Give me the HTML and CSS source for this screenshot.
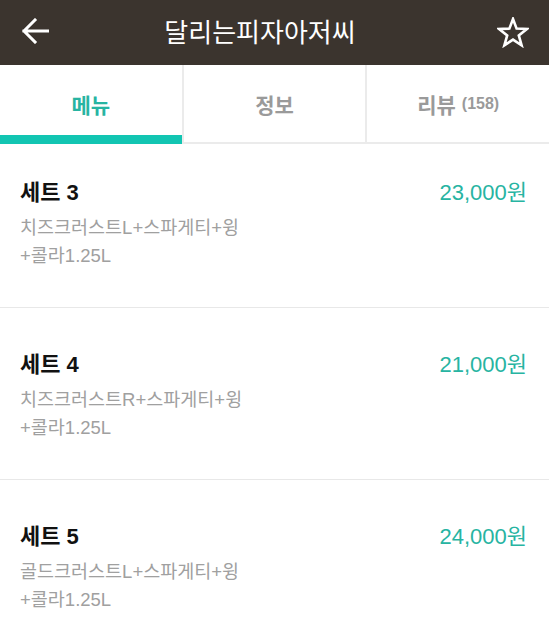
FILE: index.html
```html
<!DOCTYPE html>
<html lang="ko">

<head>
  <meta charset="UTF-8" />
  <meta name="viewport" content="width=device-width, initial-scale=1.0" />
  <title>달리는피자아저씨</title>
  <link rel="stylesheet" href="styles.css">
</head>

<body>
  <div class="header">
    <div class="header-btn back">
      <svg width="28" height="26" viewBox="0 0 28 26">
        <path d="M27 13 H3 M14 2 L3 13 L14 24" fill="none" stroke="#fff" stroke-width="3" stroke-linecap="square" />
      </svg>
    </div>
    <h1 class="title">달리는피자아저씨</h1>
    <div class="header-btn fav">
      <svg width="32" height="31" viewBox="0 0 32 31">
        <polygon points="16,2 19.6,11.6 29.8,12 21.8,18.4 24.6,28.3 16,22.6 7.4,28.3 10.2,18.4 2.2,12 12.4,11.6"
          fill="none" stroke="#fff" stroke-width="2.6" stroke-linejoin="miter" />
      </svg>
    </div>
  </div>

  <div class="tabs">
    <div class="tab active">메뉴</div>
    <div class="tab">정보</div>
    <div class="tab">리뷰 <span class="count">(158)</span></div>
  </div>

  <div class="menu-list">
    <div class="menu-item">
      <div class="row">
        <h3 class="name">세트 3</h3>
        <span class="price">23,000원</span>
      </div>
      <p class="desc">치즈크러스트L+스파게티+윙<br>+콜라1.25L</p>
    </div>
    <div class="menu-item">
      <div class="row">
        <h3 class="name">세트 4</h3>
        <span class="price">21,000원</span>
      </div>
      <p class="desc">치즈크러스트R+스파게티+윙<br>+콜라1.25L</p>
    </div>
    <div class="menu-item">
      <div class="row">
        <h3 class="name">세트 5</h3>
        <span class="price">24,000원</span>
      </div>
      <p class="desc">골드크러스트L+스파게티+윙<br>+콜라1.25L</p>
    </div>
  </div>
</body>

</html>
```

FILE: styles.css
```css
html,
body,
h1,
h3,
p {
  margin: 0;
  padding: 0;
}

body {
  font-family: "Liberation Sans", "Noto Sans CJK KR", sans-serif;
  background: #fff;
  overflow: hidden;
}

.header {
  height: 65px;
  background: #3b342e;
  display: flex;
  align-items: center;
  color: #fff;
}

.header-btn {
  width: 70px;
  height: 65px;
  display: flex;
  align-items: center;
  justify-content: center;
}

.back {
  justify-content: flex-start;
  padding-left: 21px;
  box-sizing: border-box;
  padding-bottom: 4px;
}

.fav {
  justify-content: flex-end;
  padding-right: 20px;
  box-sizing: border-box;
}

.title {
  flex: 1;
  text-align: center;
  font-size: 26px;
  font-weight: normal;
  padding-right: 29px;
  line-height: 1;
}

.tabs {
  display: flex;
  height: 79px;
  border-bottom: 2px solid #ebebeb;
  box-sizing: border-box;
}

.tab {
  flex: 1;
  display: flex;
  align-items: center;
  justify-content: center;
  font-size: 21px;
  font-weight: bold;
  color: #9a9a9a;
  border-left: 2px solid #ebebeb;
  position: relative;
}

.tab:first-child {
  border-left: none;
}

.tab.active {
  color: #27b4a2;
}

.tab.active::after {
  content: "";
  position: absolute;
  left: 0;
  right: 0;
  bottom: -2px;
  height: 9px;
  background: #12c5b2;
}

.count {
  font-size: 16px;
  margin-left: 6px;
}

.menu-item {
  padding: 42px 22px 37px 20px;
  border-bottom: 1px solid #e8e8e8;
}

.menu-item:first-child {
  padding-top: 34px;
}

.row {
  display: flex;
  justify-content: space-between;
  align-items: center;
  height: 24px;
}

.name {
  font-size: 22px;
  font-weight: bold;
  color: #111;
}

.price {
  font-size: 22px;
  color: #27b4a2;
}

.desc {
  margin-top: 12px;
  font-size: 18.5px;
  line-height: 28px;
  color: #a0a0a0;
}
```
